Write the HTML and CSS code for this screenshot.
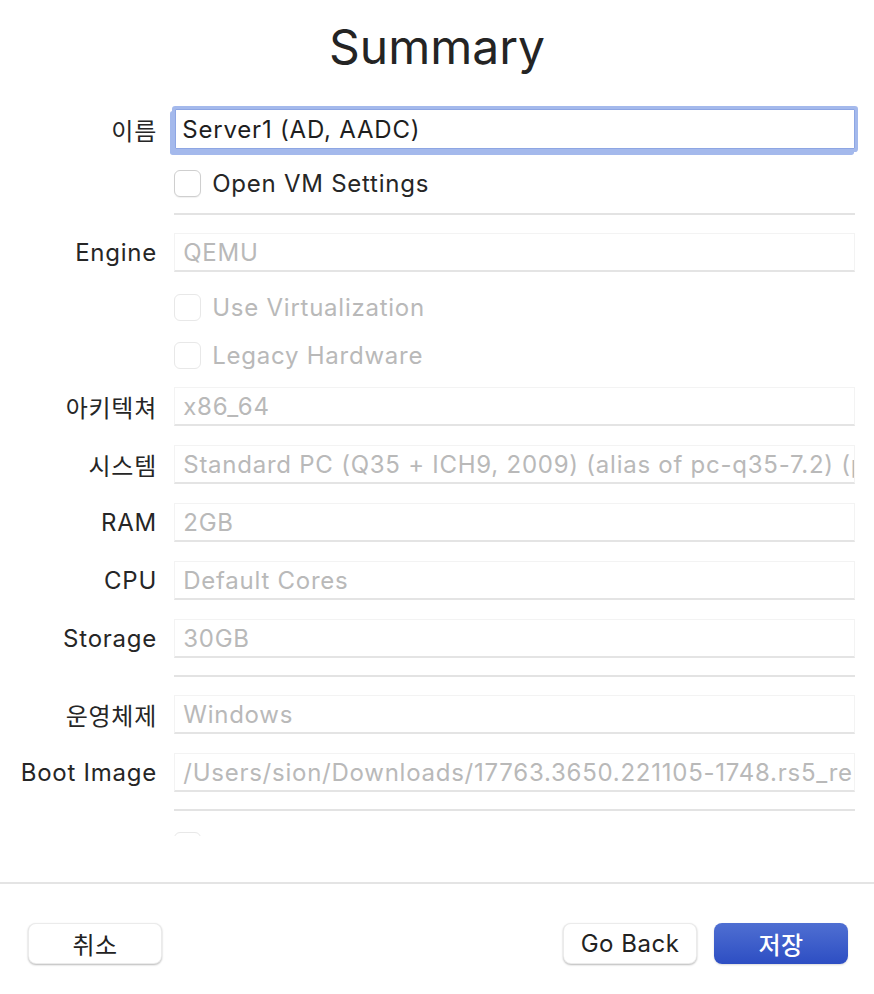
FILE: index.html
```html
<!DOCTYPE html>
<html lang="ko">
<head>
<meta charset="utf-8">
<title>Summary</title>
<link rel="stylesheet" href="styles.css">
</head>
<body>
<div class="window">
  <h1 class="title">Summary</h1>
  <div class="scroll">
    <div class="form">
      <div class="row row-name">
        <div class="label">이름</div>
        <div class="input focused">Server1 (AD, AADC)</div>
      </div>
      <div class="row row-check gap20">
        <div class="label"></div>
        <div class="check"><span class="box"></span><span class="ctext">Open VM Settings</span></div>
      </div>
      <div class="sep gap16"></div>
      <div class="row row-field gap18">
        <div class="label">Engine</div>
        <div class="field">QEMU</div>
      </div>
      <div class="row row-check gap21">
        <div class="label"></div>
        <div class="check disabled"><span class="box"></span><span class="ctext">Use Virtualization</span></div>
      </div>
      <div class="row row-check gap20">
        <div class="label"></div>
        <div class="check disabled"><span class="box"></span><span class="ctext">Legacy Hardware</span></div>
      </div>
      <div class="row row-field gap18">
        <div class="label">아키텍쳐</div>
        <div class="field">x86_64</div>
      </div>
      <div class="row row-field gap19">
        <div class="label">시스템</div>
        <div class="field">Standard PC (Q35 + ICH9, 2009) (alias of pc-q35-7.2) (pc-q35-7.2)</div>
      </div>
      <div class="row row-field gap19">
        <div class="label">RAM</div>
        <div class="field">2GB</div>
      </div>
      <div class="row row-field gap19">
        <div class="label">CPU</div>
        <div class="field">Default Cores</div>
      </div>
      <div class="row row-field gap19">
        <div class="label">Storage</div>
        <div class="field">30GB</div>
      </div>
      <div class="sep gap17"></div>
      <div class="row row-field gap18">
        <div class="label">운영체제</div>
        <div class="field">Windows</div>
      </div>
      <div class="row row-field gap19">
        <div class="label">Boot Image</div>
        <div class="field">/Users/sion/Downloads/17763.3650.221105-1748.rs5_release_svc_refresh_SERVER_EVAL_x64FRE_en-us.iso</div>
      </div>
      <div class="sep gap17"></div>
      <div class="row row-check gap20">
        <div class="label"></div>
        <div class="check disabled"><span class="box"></span><span class="ctext"></span></div>
      </div>
    </div>
  </div>
  <div class="footer">
    <button class="btn">취소</button>
    <div class="spacer"></div>
    <button class="btn">Go Back</button>
    <button class="btn primary">저장</button>
  </div>
</div>
</body>
</html>
```

FILE: styles.css
```css
* { box-sizing: border-box; }
html, body {
  margin: 0;
  padding: 0;
  background: #ffffff;
}
body {
  font-family: Inter, "Noto Sans CJK KR", sans-serif;
  color: #262626;
  width: 874px;
  height: 994px;
  overflow: hidden;
}
.window {
  display: flex;
  flex-direction: column;
  height: 994px;
}
.title {
  margin: 18px 0 0 0;
  height: 58px;
  line-height: 58px;
  font-size: 48px;
  font-weight: 400;
  text-align: center;
  color: #242424;
}
.scroll {
  height: 760px;
  overflow: hidden;
}
.form {
  display: flex;
  flex-direction: column;
  padding: 33px 19px 0 0;
}
.row {
  display: flex;
  align-items: center;
  gap: 18px;
}
.label {
  width: 157px;
  flex: none;
  text-align: right;
  font-size: 24px;
  letter-spacing: 0.75px;
  margin-right: -0.75px;
  color: #262626;
  white-space: nowrap;
}
.row-name { height: 40px; }
.row-check { height: 28px; }
.row-field { height: 39px; }
.gap16 { margin-top: 16px; }
.gap17 { margin-top: 17px; }
.gap18 { margin-top: 18px; }
.gap19 { margin-top: 19px; }
.gap20 { margin-top: 20px; }
.gap21 { margin-top: 21px; }

.input {
  flex: 1;
  height: 40px;
  margin-left: 1px;
  padding: 0 6px;
  display: flex;
  align-items: center;
  font-size: 24px;
  letter-spacing: 0.8px;
  color: #1e1e1e;
  background: #fff;
  border: 1px solid #8ea6e3;
  white-space: nowrap;
  overflow: hidden;
}
.input.focused {
  border-radius: 1px;
  box-shadow: 0 0 0 3px #a4b9ec, -3px 4px 0 2px #a4b9ec;
}

.field {
  flex: 1;
  height: 39px;
  padding: 0 8px;
  display: flex;
  align-items: center;
  font-size: 24px;
  letter-spacing: 0.75px;
  color: #b9b9b9;
  background: #fff;
  border: 1px solid #f3f3f3;
  border-bottom: 2px solid #e4e4e4;
  white-space: nowrap;
  overflow: hidden;
}

.sep {
  height: 2px;
  margin-left: 174px;
  background: #e3e3e3;
}

.check {
  display: flex;
  align-items: center;
  gap: 11px;
  font-size: 24px;
  letter-spacing: 0.75px;
  color: #262626;
}
.check .box {
  width: 27px;
  height: 27px;
  border-radius: 6px;
  border: 1px solid #cfcfcf;
  background: #fff;
  box-shadow: 0 1px 1px rgba(0,0,0,0.06);
}
.check.disabled { color: #b9b9b9; }
.check.disabled .box { border-color: #e8e8e8; box-shadow: none; }

.footer {
  margin-top: 46px;
  border-top: 2px solid #e4e4e4;
  display: flex;
  align-items: flex-start;
  gap: 17px;
  padding: 39px 26px 0 28px;
}
.spacer { flex: 1; }
.btn {
  width: 134px;
  height: 41px;
  border-radius: 8px;
  border: 1px solid rgba(0,0,0,0.08);
  background: #ffffff;
  box-shadow: 0 1px 2px rgba(0,0,0,0.28);
  font-family: Inter, "Noto Sans CJK KR", sans-serif;
  font-size: 24px;
  letter-spacing: 0.5px;
  color: #222;
  padding: 0;
  display: flex;
  align-items: center;
  justify-content: center;
}
.btn.primary {
  color: #ffffff;
  font-weight: 500;
  border: none;
  background: linear-gradient(#4f6fd2, #2d4ec3);
  box-shadow: 0 1px 2px rgba(0,0,0,0.15);
}
```
